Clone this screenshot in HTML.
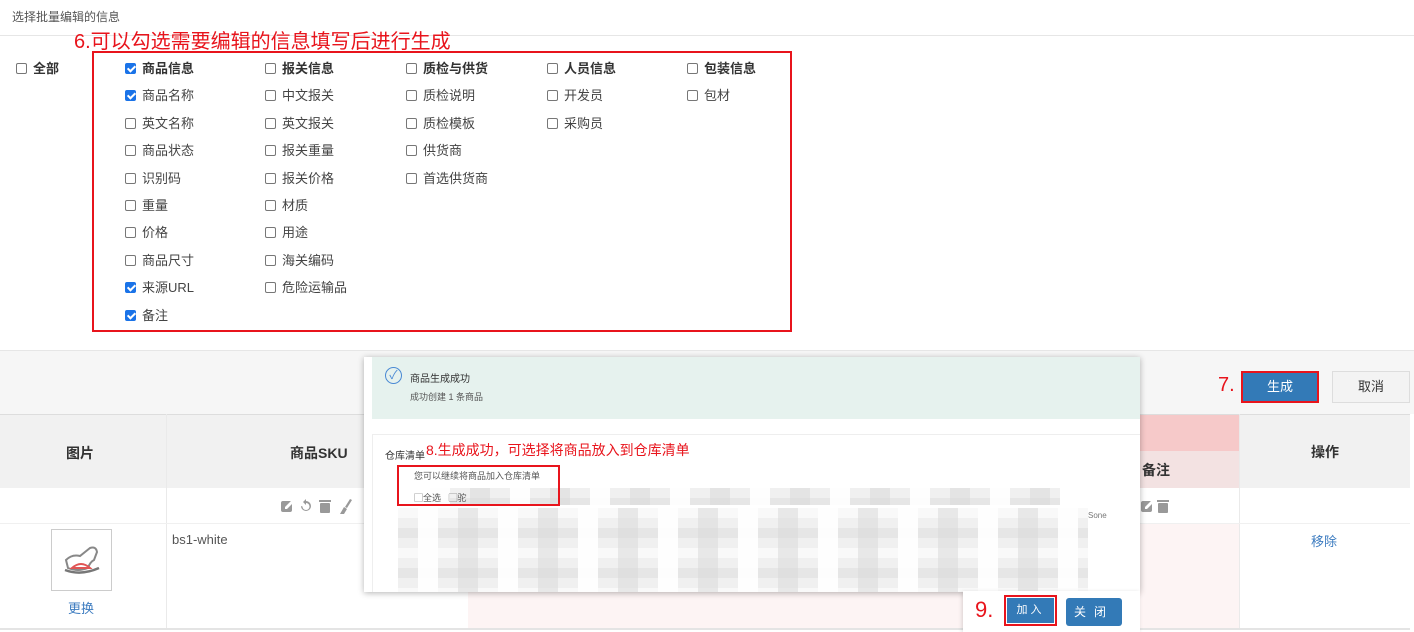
<!DOCTYPE html>
<html><head><meta charset="utf-8"><style>
*{margin:0;padding:0;box-sizing:border-box}
body{width:1414px;height:632px;overflow:hidden;position:relative;background:#fff;font-family:"Liberation Sans","Noto Sans CJK SC",sans-serif;font-size:13px;color:#444}
.a{position:absolute;white-space:nowrap}
.cb{position:absolute;width:150px;height:16px;line-height:16px;font-size:13px;color:#444;white-space:nowrap}
.cb i{position:absolute;left:0;top:2px;width:11px;height:11px;border:1px solid #777;border-radius:2px;background:#fff}
.cb i.on{background:#1a73e8;border-color:#1a73e8}
.cb i.on:after{content:"";position:absolute;left:3px;top:0px;width:3px;height:6px;border:solid #fff;border-width:0 2px 2px 0;transform:rotate(45deg)}
.cb span{position:absolute;left:17px;top:0;white-space:nowrap}
.b{font-weight:bold;color:#333}
.red{color:#e8141c}
.pix{position:absolute;background-color:#f0f0f0;
background-image:
linear-gradient(90deg,rgba(255,255,255,.9) 0 20px,transparent 20px 40px,rgba(215,215,215,.5) 40px 60px,transparent 60px),
linear-gradient(0deg,rgba(255,255,255,.6) 0 10px,transparent 10px 20px,rgba(220,220,220,.5) 20px 30px,transparent 30px);
background-size:80px 100%,100% 40px}
</style></head><body>
<div class="a" style="left:12px;top:8px;font-size:12px;color:#555">选择批量编辑的信息</div>
<div class="a" style="left:0;top:35px;width:1414px;height:1px;background:#e6e6e6"></div>
<div class="a red" style="left:74px;top:25px;font-size:20px">6.可以勾选需要编辑的信息填写后进行生成</div>
<div class="a" style="left:92px;top:51px;width:700px;height:281px;border:2px solid #e8141c"></div>
<div class="cb" style="left:16px;top:61px"><i></i><span class="b">全部</span></div>

<div class="cb" style="left:125px;top:61px"><i class="on"></i><span class="b">商品信息</span></div>
<div class="cb" style="left:125px;top:88px"><i class="on"></i><span>商品名称</span></div>
<div class="cb" style="left:125px;top:116px"><i></i><span>英文名称</span></div>
<div class="cb" style="left:125px;top:143px"><i></i><span>商品状态</span></div>
<div class="cb" style="left:125px;top:171px"><i></i><span>识别码</span></div>
<div class="cb" style="left:125px;top:198px"><i></i><span>重量</span></div>
<div class="cb" style="left:125px;top:225px"><i></i><span>价格</span></div>
<div class="cb" style="left:125px;top:253px"><i></i><span>商品尺寸</span></div>
<div class="cb" style="left:125px;top:280px"><i class="on"></i><span>来源URL</span></div>
<div class="cb" style="left:125px;top:308px"><i class="on"></i><span>备注</span></div>

<div class="cb" style="left:265px;top:61px"><i></i><span class="b">报关信息</span></div>
<div class="cb" style="left:265px;top:88px"><i></i><span>中文报关</span></div>
<div class="cb" style="left:265px;top:116px"><i></i><span>英文报关</span></div>
<div class="cb" style="left:265px;top:143px"><i></i><span>报关重量</span></div>
<div class="cb" style="left:265px;top:171px"><i></i><span>报关价格</span></div>
<div class="cb" style="left:265px;top:198px"><i></i><span>材质</span></div>
<div class="cb" style="left:265px;top:225px"><i></i><span>用途</span></div>
<div class="cb" style="left:265px;top:253px"><i></i><span>海关编码</span></div>
<div class="cb" style="left:265px;top:280px"><i></i><span>危险运输品</span></div>

<div class="cb" style="left:406px;top:61px"><i></i><span class="b">质检与供货</span></div>
<div class="cb" style="left:406px;top:88px"><i></i><span>质检说明</span></div>
<div class="cb" style="left:406px;top:116px"><i></i><span>质检模板</span></div>
<div class="cb" style="left:406px;top:143px"><i></i><span>供货商</span></div>
<div class="cb" style="left:406px;top:171px"><i></i><span>首选供货商</span></div>

<div class="cb" style="left:547px;top:61px"><i></i><span class="b">人员信息</span></div>
<div class="cb" style="left:547px;top:88px"><i></i><span>开发员</span></div>
<div class="cb" style="left:547px;top:116px"><i></i><span>采购员</span></div>

<div class="cb" style="left:687px;top:61px"><i></i><span class="b">包装信息</span></div>
<div class="cb" style="left:687px;top:88px"><i></i><span>包材</span></div>

<!-- gray band -->
<div class="a" style="left:0;top:350px;width:1414px;height:64px;background:#f6f6f6;border-top:1px solid #e6e6e6"></div>
<div class="a red" style="left:1218px;top:374px;font-size:20px">7.</div>
<div class="a" style="left:1241px;top:371px;width:78px;height:32px;border:2px solid #e8141c;background:#337ab7;color:#fff;text-align:center;line-height:28px">生成</div>
<div class="a" style="left:1332px;top:371px;width:78px;height:32px;border:1px solid #ddd;background:#f3f3f3;color:#333;text-align:center;line-height:30px">取消</div>

<!-- table -->
<div class="a" style="left:0;top:414px;width:1410px;height:74px;background:#f1f1f1;border-top:1px solid #ddd"></div>
<div class="a" style="left:166px;top:414px;width:1px;height:216px;background:#eaeaea"></div>
<div class="a" style="left:1140px;top:415px;width:99px;height:36px;background:#f6c9c9"></div>
<div class="a" style="left:1140px;top:451px;width:99px;height:37px;background:#f3e2e2"></div>
<div class="a" style="left:1140px;top:523px;width:99px;height:107px;background:#fdf4f4"></div>
<div class="a" style="left:468px;top:592px;width:500px;height:38px;background:#fdf4f4"></div>
<div class="a" style="left:1239px;top:414px;width:1px;height:216px;background:#eaeaea"></div>
<div class="a b" style="left:66px;top:443px;font-size:14px">图片</div>
<div class="a b" style="left:290px;top:443px;font-size:14px">商品SKU</div>
<div class="a b" style="left:1142px;top:460px;font-size:14px">备注</div>
<div class="a b" style="left:1311px;top:442px;font-size:14px">操作</div>
<div class="a" style="left:0;top:523px;width:1410px;height:1px;background:#f0f0f0"></div>
<svg class="a" style="left:280px;top:498px" width="75" height="16" viewBox="0 0 75 16" fill="#999">
<rect x="1" y="3" width="11" height="11" rx="2"/><path d="M5 9 l7-7 2 2-7 7h-2z" fill="#fff"/>
<path d="M21 8a5 5 0 1 0 5-5v-2l-3 3 3 3v-2a3.5 3.5 0 1 1-3.5 3.5z"/>
<rect x="39" y="2" width="12" height="2"/><rect x="40" y="5" width="10" height="10" rx="1"/>
<path d="M70 1 l2 1-5 8 -2-1z M64 9 l3 2 -3 5 -4 0z"/></svg>
<svg class="a" style="left:1140px;top:498px" width="32" height="16" viewBox="0 0 32 16" fill="#999">
<rect x="1" y="3" width="11" height="11" rx="2"/><path d="M5 9 l7-7 2 2-7 7h-2z" fill="#fff"/>
<rect x="17" y="2" width="12" height="2"/><rect x="18" y="5" width="10" height="10" rx="1"/></svg>
<div class="a" style="left:0;top:628px;width:1410px;height:2px;background:#e4e4e4"></div>
<div class="a" style="left:51px;top:529px;width:61px;height:62px;border:1px solid #ccc;background:#fff">
<svg width="59" height="60" viewBox="0 0 59 60"><path d="M14 30 q6-6 14-4 l10-8 q6-2 7 4 l-3 8 q-4 2-6 8 q-10 4-20 0 z" fill="none" stroke="#888" stroke-width="2"/><path d="M20 38 q9-8 18 0 z" fill="none" stroke="#e05555" stroke-width="2"/><path d="M13 40 q16 6 34-2" fill="none" stroke="#777" stroke-width="2.5"/></svg></div>
<div class="a" style="left:68px;top:598px;color:#3d7cc0">更换</div>
<div class="a" style="left:172px;top:532px;color:#555">bs1-white</div>
<div class="a" style="left:1311px;top:531px;color:#3d7cc0">移除</div>

<!-- modal -->
<div class="a" style="left:364px;top:357px;width:776px;height:235px;background:#fff;box-shadow:0 1px 6px rgba(0,0,0,.3)"></div>
<div class="a" style="left:372px;top:357px;width:768px;height:62px;background:#e6f2ee"></div>
<div class="a" style="left:385px;top:367px;width:17px;height:17px;border:1px solid #4a8ad4;border-radius:50%;color:#4a8ad4;font-size:12px;line-height:15px;text-align:center">✓</div>
<div class="a" style="left:410px;top:370px;font-size:10px;color:#333">商品生成成功</div>
<div class="a" style="left:410px;top:390px;font-size:9px;color:#555">成功创建 1 条商品</div>
<div class="a" style="left:372px;top:434px;width:768px;height:158px;border-top:1px solid #eee;border-left:1px solid #eee"></div>
<div class="a" style="left:385px;top:447px;font-size:10px;color:#333">仓库清单</div>
<div class="a red" style="left:426px;top:440px;font-size:14px">8.生成成功，可选择将商品放入到仓库清单</div>
<div class="pix" style="left:430px;top:488px;width:630px;height:17px"></div>
<div class="pix" style="left:398px;top:508px;width:690px;height:84px;background-position:20px 0,0 10px"></div>
<div class="a" style="left:1088px;top:511px;font-size:8px;color:#777">Sone</div>
<div class="a" style="left:397px;top:465px;width:163px;height:41px;border:2px solid #e8141c"></div>
<div class="a" style="left:414px;top:469px;font-size:9px;color:#555">您可以继续将商品加入仓库清单</div>
<div class="a" style="left:414px;top:491px;font-size:9px;color:#555">▢全选 &nbsp;&nbsp;▢驼</div>
<!-- footer -->
<div class="a" style="left:963px;top:591px;width:177px;height:41px;background:#fff;box-shadow:-1px 1px 4px rgba(0,0,0,.15)"></div>
<div class="a red" style="left:975px;top:597px;font-size:22px">9.</div>
<div class="a" style="left:1004px;top:595px;width:53px;height:31px;border:2px solid #e8141c"></div>
<div class="a" style="left:1007px;top:598px;width:47px;height:25px;background:#337ab7;color:#fff;font-size:11px;line-height:25px;text-align:center;letter-spacing:3px">加入</div>
<div class="a" style="left:1066px;top:598px;width:56px;height:28px;background:#337ab7;border-radius:3px;color:#fff;font-size:12px;line-height:28px;text-align:center;letter-spacing:8px">关闭</div>
</body></html>
